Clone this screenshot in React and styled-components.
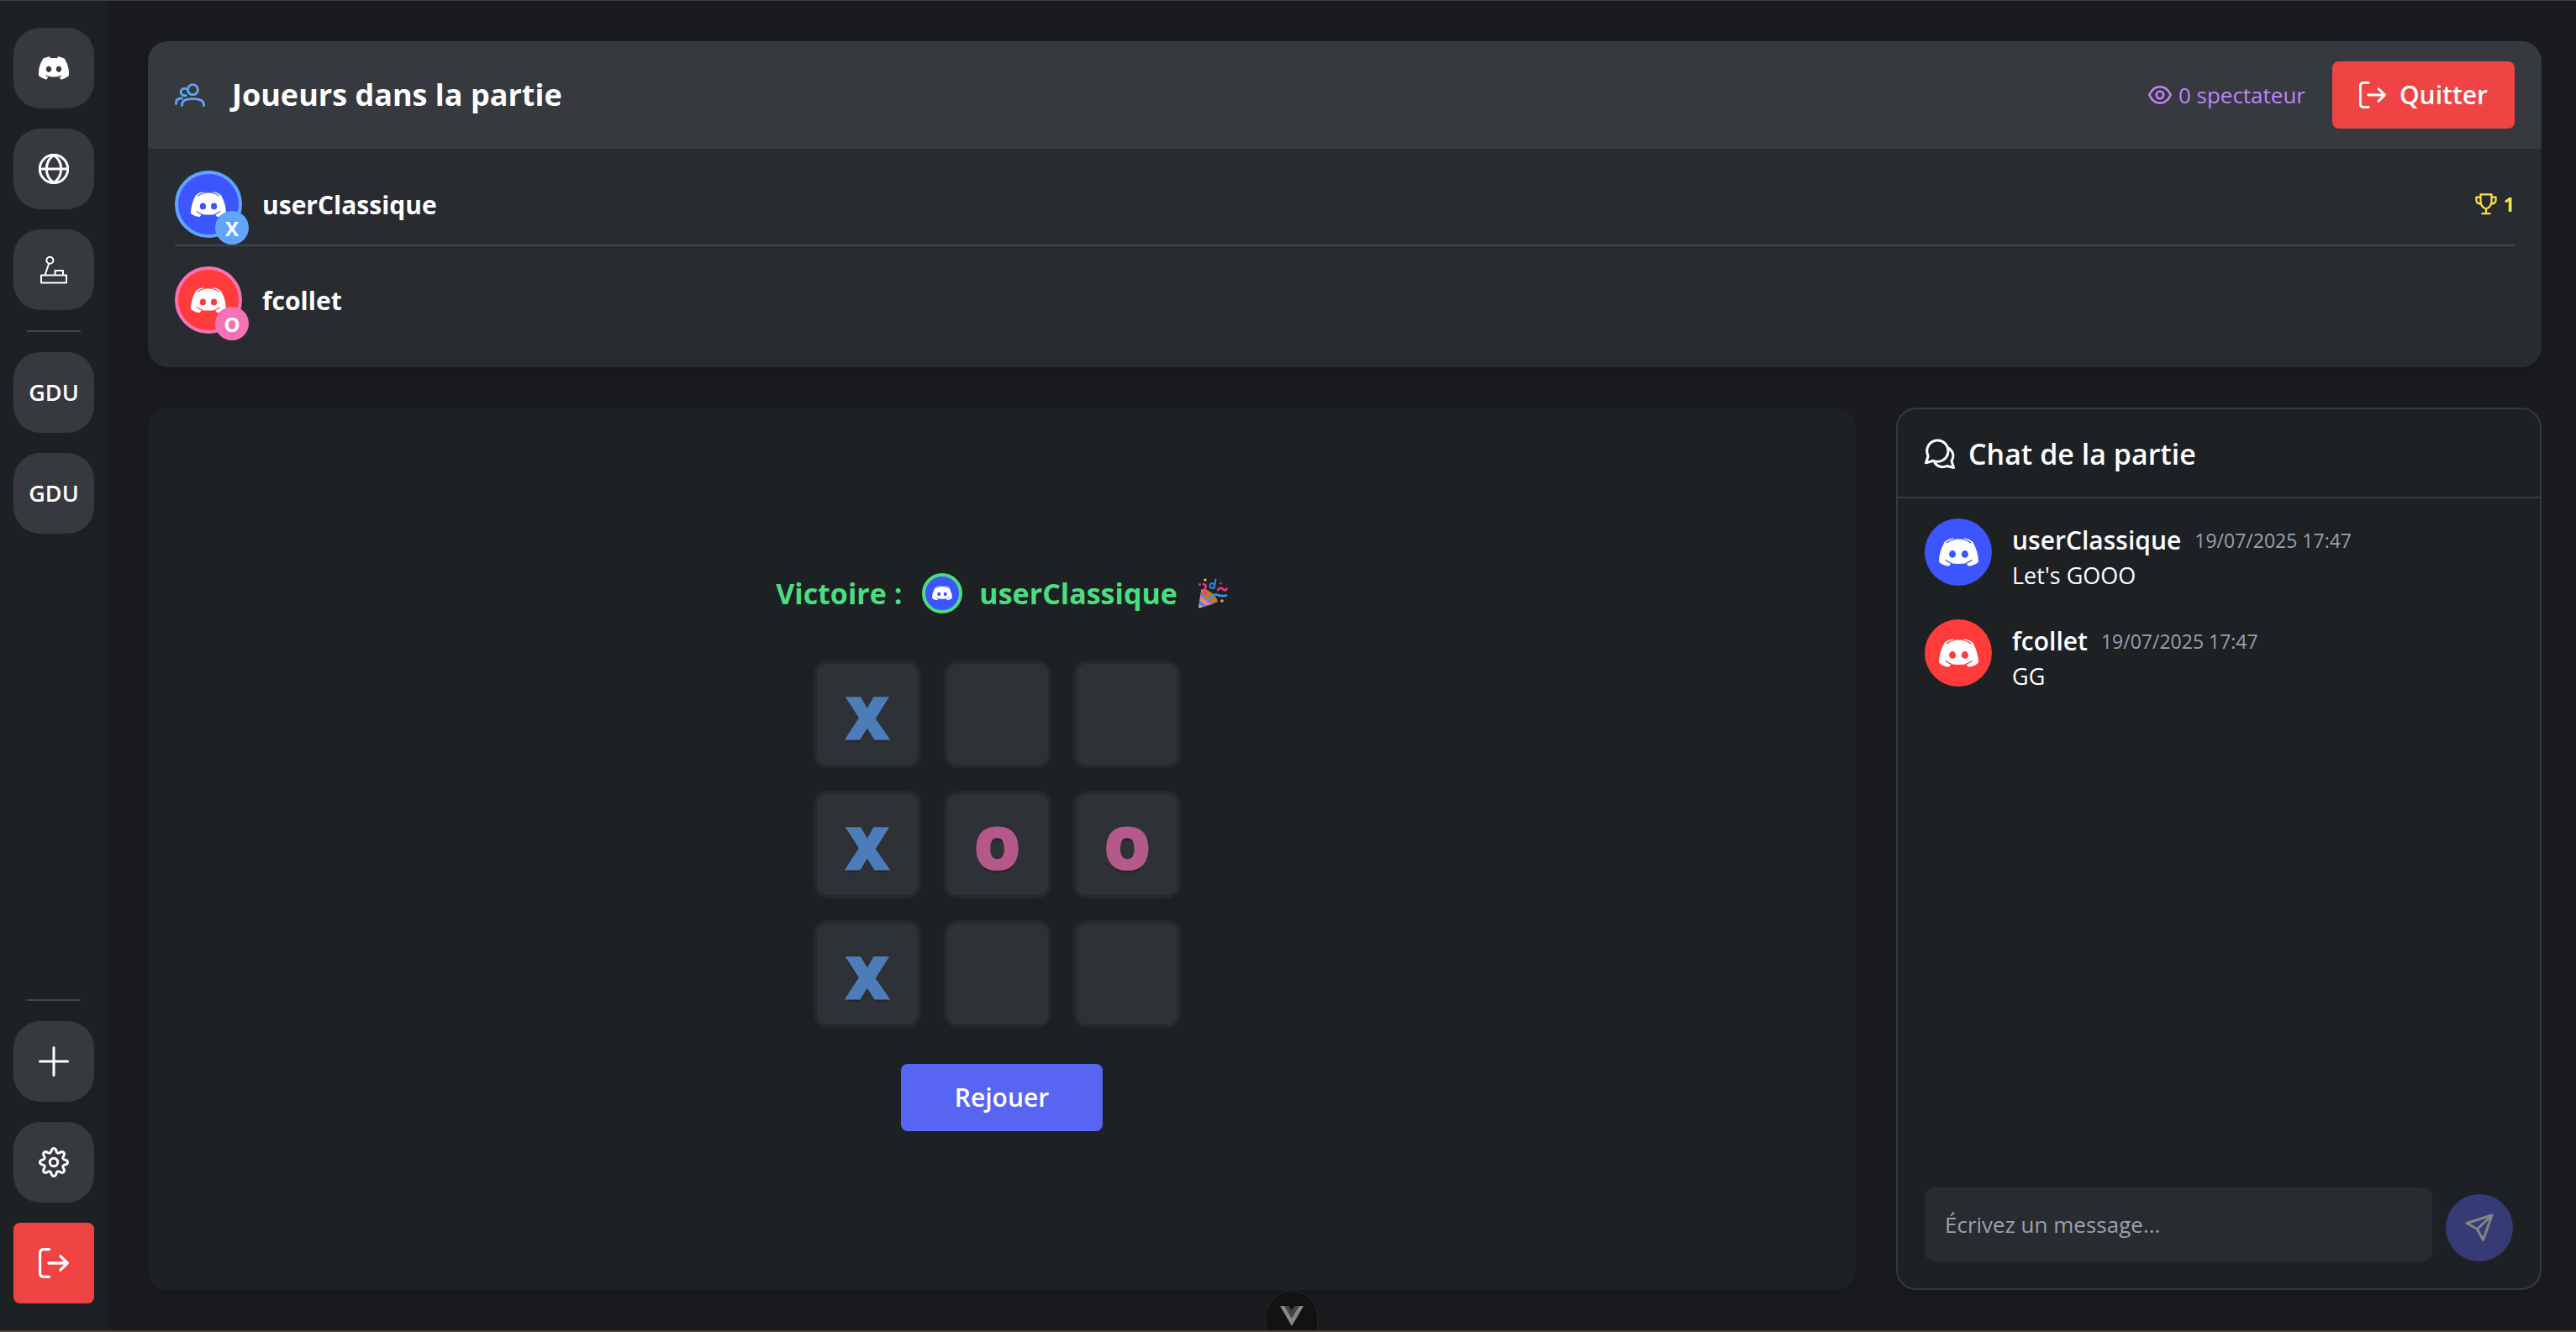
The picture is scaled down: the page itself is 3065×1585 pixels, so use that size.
import React from "react";
import styled, { createGlobalStyle } from "styled-components";
import { SiDiscord } from "react-icons/si";

const GlobalStyle = createGlobalStyle`
  *, *::before, *::after { box-sizing: border-box; }
  body { margin: 0; background: #1a1b1e; }
  button, input { font: inherit; color: inherit; }
  h1, h2, p, ul, ol { margin: 0; padding: 0; font: inherit; list-style: none; }
  button { border: 0; padding: 0; cursor: pointer; }
`;

const blue = "#60a5fa";
const pink = "#f472b6";

/* ---------- icons ---------- */

const Stroke = styled.svg`
  display: block;
  flex: none;
  fill: none;
  stroke: currentColor;
  stroke-linecap: round;
  stroke-linejoin: round;
`;

const Icon = ({ size = 36, box = 36, width = 3, children }) => (
  <Stroke width={size} height={size} viewBox={`0 0 ${box} ${box}`} strokeWidth={width} aria-hidden="true">
    {children}
  </Stroke>
);

const GlobeIcon = () => (
  <Icon>
    <circle cx="18" cy="18" r="16.7" />
    <path d="M1.5 18H34.5M18 1.5C11.5 6 9.3 12 9.3 18S11.5 30 18 34.5M18 1.5C24.5 6 26.7 12 26.7 18S24.5 30 18 34.5" />
  </Icon>
);

const JoystickIcon = () => (
  <Icon width={2}>
    <circle cx="13.4" cy="6.8" r="4" />
    <path d="M12 11L7.5 24.5M3 24.5H33V33.5H3ZM19.5 24V19H29V24" />
  </Icon>
);

const PlusIcon = () => (
  <Icon>
    <path d="M18 1.5V34.5M1.5 18H34.5" />
  </Icon>
);

const gearPath = (() => {
  const points = [];
  for (let i = 0; i < 160; i += 1) {
    const a = (i / 160) * Math.PI * 2;
    const wave = Math.cos(a * 8);
    const r = 14.2 + 2.3 * Math.sign(wave) * Math.pow(Math.abs(wave), 0.7);
    points.push(`${(18 + r * Math.cos(a)).toFixed(2)} ${(18 + r * Math.sin(a)).toFixed(2)}`);
  }
  return `M${points.join("L")}Z`;
})();

const GearIcon = () => (
  <Icon>
    <path d={gearPath} />
    <circle cx="18" cy="18" r="4.7" />
  </Icon>
);

const ExitIcon = ({ size }) => (
  <Icon size={size} width={3.3}>
    <path d="M12.5 1.7H5.5a4 4 0 0 0-4 4V30.3a4 4 0 0 0 4 4H12.5M12 18H34M26 9.8L34.3 18L26 26.2" />
  </Icon>
);

const UsersIcon = () => (
  <Icon width={2.8}>
    <circle cx="21.4" cy="11.7" r="6" />
    <path d="M8.7 30.5V29C8.7 24 13.5 22.6 21.5 22.6S34.5 24 34.5 29.5V30.5" />
    <path d="M13.2 10.6C9 9.8 7.2 12 7.2 14.6S9.3 19.3 13.4 18.6" />
    <path d="M1.5 28.5V27C1.5 23.8 3.5 22 8.5 22" />
  </Icon>
);

const EyeIcon = () => (
  <Icon size={28} box={28} width={2.6}>
    <path d="M1.3 14C4 8 8.5 4.3 14 4.3S24 8 26.7 14C24 20 19.5 23.7 14 23.7S4 20 1.3 14Z" />
    <circle cx="14" cy="14" r="4.2" />
  </Icon>
);

const TrophyIcon = () => (
  <Icon size={26} box={28} width={2.4}>
    <path d="M7 1.5H21V10C21 15 18 18.5 14 20C10 18.5 7 15 7 10ZM14 20V26M9 26H19M7 5H1.5V9C1.5 12 4 13.5 7.5 13.5M21 5H26.5V9C26.5 12 24 13.5 20.5 13.5" />
  </Icon>
);

const CommentsIcon = () => (
  <Icon>
    <path d="M1.5 28.8L4.2 20.5A12.6 12.6 0 1 1 10.5 26.3Z" />
    <path d="M29 11.5C34 15.5 35.5 21 32 26.5L34.5 34.5L26.5 32.5C21 35 15 33.5 12 28.5" />
  </Icon>
);

const SendIcon = () => (
  <Icon size={34} box={34}>
    <path d="M32 2L2 11.5L14.5 18.5L21.5 31.5ZM32 2L14.5 18.5" />
  </Icon>
);

const Glyph = ({ width, ground }) => (
  <svg width={width} viewBox="0 0 140 101" aria-hidden="true">
    <path
      fill="#fff"
      d="M20 14Q33 3 50 1L53 5.5Q70 4 87 5.5L90 1Q107 3 120 14Q140 50 140 86Q124 100 104 100L97 90Q70 94 43 90L36 100Q16 100 0 86Q0 50 20 14Z"
    />
    <g stroke={ground} strokeWidth="4" fill="none">
      <path d="M26 18Q38 8 55 5M114 18Q102 8 85 5M23 78Q32 86 46 91M117 78Q108 86 94 91" />
    </g>
    <ellipse cx="48" cy="58" rx="12" ry="13" fill={ground} />
    <ellipse cx="92" cy="58" rx="12" ry="13" fill={ground} />
  </svg>
);

const PartyIcon = () => (
  <svg width="36" height="36" viewBox="0 0 36 36" role="img" aria-label="Fête">
    <path d="M4.5 13L1 34.5Q1.5 36 4 35L23.5 28Q22 18 4.5 13Z" fill="#f5a64b" />
    <path d="M4 16L20 30L15 31.8L3 22ZM2.3 26L11 33L7 34.5L1.6 31Z" fill="#5b7df0" />
    <path d="M3.2 20L17 31L13 32.7L2.5 24.5Z" fill="#e57b86" opacity=".75" />
    <ellipse cx="14" cy="21" rx="4.5" ry="11.5" transform="rotate(-50 14 21)" fill="#c77a14" />
    <g fill="none" strokeWidth="2.6" strokeLinecap="round">
      <path d="M7 7Q11 8 9 12T10 19" stroke="#f92f8b" />
      <path d="M24 14Q27 10 30 13T34.5 12.5" stroke="#f92f8b" />
      <path d="M14 24Q19 18 24 20T34 20.5" stroke="#2f9bf0" />
      <path d="M21.5 1.5L19.5 12M19.5 7Q15 5 14.5 9T19 11" stroke="#2f8be8" strokeWidth="2" />
    </g>
    <circle cx="9" cy="2" r="1.6" fill="#ffd04a" />
    <circle cx="2.5" cy="7.5" r="1.4" fill="#f92f8b" />
    <circle cx="27.5" cy="6" r="1.6" fill="#c9267d" />
    <circle cx="29" cy="27" r="1.8" fill="#f5a64b" />
  </svg>
);

/* ---------- shell ---------- */

const Shell = styled.div`
  display: flex;
  min-height: 100vh;
  border-top: 1px solid #3f443f;
  border-bottom: 2px solid #4a4540;
  background: #1a1b1e;
  color: #fff;
  font-family: "Open Sans", "Noto Sans", sans-serif;
  font-size: 30px;
  line-height: 48px;
`;

const Sidebar = styled.nav`
  flex: none;
  display: flex;
  flex-direction: column;
  align-items: center;
  gap: 24px;
  width: 128px;
  padding: 32px 0;
  background: #1e2124;
`;

const SideButton = styled.button`
  display: flex;
  align-items: center;
  justify-content: center;
  width: 96px;
  height: 96px;
  border-radius: ${(p) => (p.$danger ? "8px" : "32px")};
  background: ${(p) => (p.$danger ? "#f04444" : "#36393e")};
  font-size: 27px;
  font-weight: 600;
`;

const Divider = styled.hr`
  width: 64px;
  height: 2px;
  margin: 0;
  margin-top: ${(p) => (p.$push ? "auto" : 0)};
  border: 0;
  background: #424549;
`;

const Main = styled.main`
  flex: 1;
  min-width: 0;
  display: flex;
  flex-direction: column;
  gap: 48px;
  padding: 48px 41px 48px 48px;
`;

const Card = styled.section`
  border-radius: 24px;
  background: ${(p) => p.$ground || "#1e2124"};
  box-shadow: 0 20px 30px -6px rgba(0, 0, 0, 0.08), 0 8px 12px -8px rgba(0, 0, 0, 0.08);
  overflow: hidden;
`;

/* ---------- players ---------- */

const PlayersHeader = styled.header`
  display: flex;
  align-items: center;
  gap: 32px;
  padding: 24px 32px;
  background: #36393e;
`;

const HeaderIcon = styled.span`
  color: ${blue};
`;

const PlayersTitle = styled.h1`
  flex: 1;
  font-size: 36px;
  font-weight: 700;
`;

const Spectators = styled.p`
  display: flex;
  align-items: center;
  gap: 8px;
  color: #c084fc;
  font-size: 26px;
`;

const QuitButton = styled.button`
  display: flex;
  align-items: center;
  gap: 16px;
  height: 80px;
  padding: 0 32px;
  border-radius: 8px;
  background: #f04444;
  font-weight: 600;
`;

const PlayerList = styled.ul`
  padding: 2px 32px 32px;
`;

const PlayerRow = styled.li`
  display: flex;
  align-items: center;
  gap: 24px;
  padding: 24px 0 8px;
  font-weight: 700;

  & + & {
    border-top: 2px solid #424549;
  }
`;

const AvatarFrame = styled.div`
  position: relative;
  flex: none;
`;

const Avatar = styled.div`
  flex: none;
  display: flex;
  align-items: center;
  justify-content: center;
  width: ${(p) => p.$size}px;
  height: ${(p) => p.$size}px;
  border: ${(p) => (p.$ring ? `4px solid ${p.$ring}` : "0")};
  border-radius: 50%;
  background: ${(p) => p.$ground};
`;

const Mark = styled.span`
  position: absolute;
  right: -8px;
  bottom: -8px;
  width: 40px;
  height: 40px;
  border-radius: 20px;
  background: ${(p) => p.$ground};
  font-size: 24px;
  line-height: 42px;
  text-align: center;
`;

const PlayerName = styled.span`
  flex: 1;
  padding-top: 2px;
`;

const Wins = styled.span`
  display: flex;
  align-items: center;
  gap: 8px;
  color: #fde047;
  font-size: 23px;
`;

/* ---------- game ---------- */

const Columns = styled.div`
  flex: 1;
  display: flex;
  gap: 48px;
`;

const GameCard = styled(Card)`
  flex: 1;
  display: flex;
  flex-direction: column;
  align-items: center;
  justify-content: center;
`;

const Result = styled.h2`
  display: flex;
  align-items: center;
  gap: 24px;
  margin-bottom: 48px;
  color: #4ade80;
  font-size: 34px;
  font-weight: 700;
  line-height: 64px;
`;

const Winner = styled.span`
  display: flex;
  align-items: center;
  gap: 20px;
`;

const Board = styled.div`
  display: grid;
  grid-template: repeat(3, 1fr) / repeat(3, 1fr);
  gap: 16px;
  width: 448px;
  height: 448px;
`;

const Cell = styled.button`
  width: 128px;
  height: 128px;
  padding-top: 6px;
  border: 4px solid #282b30;
  border-radius: 16px;
  background: #36393e;
  color: ${(p) => p.$color};
  font-size: 68px;
  font-weight: 800;
  line-height: 114px;
  -webkit-text-stroke: 3px ${(p) => p.$color};
  text-shadow: 0 4px 2px rgba(0, 0, 0, 0.3);
  opacity: 0.7;
`;

const ReplayButton = styled.button`
  height: 80px;
  margin-top: 32px;
  padding: 0 64px;
  border-radius: 8px;
  background: #5865f2;
  font-weight: 600;
`;

/* ---------- chat ---------- */

const ChatCard = styled(Card)`
  flex: none;
  display: flex;
  flex-direction: column;
  width: 768px;
  border: 2px solid #36393e;
`;

const ChatTitle = styled.h2`
  display: flex;
  align-items: center;
  gap: 16px;
  height: 106px;
  padding: 2px 32px 0;
  border-bottom: 2px solid #36393e;
  font-size: 34px;
  font-weight: 600;
`;

const Messages = styled.ol`
  flex: 1;
  display: flex;
  flex-direction: column;
  gap: 32px;
  padding: 24px 32px;
`;

const Message = styled.li`
  display: flex;
  gap: 24px;
  height: 88px;
`;

const MessageBody = styled.div`
  padding-top: 2px;
`;

const MessageHead = styled.div`
  display: flex;
  align-items: center;
  gap: 16px;
`;

const Author = styled.span`
  font-weight: 600;
`;

const Time = styled.time`
  color: #99a1af;
  font-size: 23px;
`;

const MessageText = styled.p`
  font-size: 27px;
  line-height: 36px;
`;

const Composer = styled.form`
  display: flex;
  align-items: flex-end;
  gap: 16px;
  padding: 32px;
`;

const MessageInput = styled.input`
  flex: 1;
  min-width: 0;
  height: 88px;
  padding: 0 24px;
  border: 0;
  border-radius: 12px;
  background: #282b30;
  font-size: 26px;

  &::placeholder {
    color: #99a1af;
    opacity: 1;
  }
`;

const SendButton = styled.button`
  display: flex;
  align-items: center;
  justify-content: center;
  width: 80px;
  height: 80px;
  border-radius: 50%;
  background: #363b76;
  color: #848484;
`;

const DevBadge = styled.div`
  position: fixed;
  left: 50%;
  bottom: 2px;
  display: flex;
  justify-content: center;
  width: 64px;
  height: 48px;
  margin-left: -28px;
  padding-top: 17px;
  border: 2px solid #1f1f20;
  border-bottom: 0;
  border-radius: 32px 32px 0 0;
  background: #121212;
`;

const BLUE_GROUND = "#3c55ff";
const RED_GROUND = "#ff3b3b";

const players = [
  { name: "userClassique", mark: "X", color: blue, ground: BLUE_GROUND, wins: 1 },
  { name: "fcollet", mark: "O", color: pink, ground: RED_GROUND, wins: 0 },
];

const messages = [
  { name: "userClassique", ground: BLUE_GROUND, time: "19/07/2025 17:47", text: "Let's GOOO" },
  { name: "fcollet", ground: RED_GROUND, time: "19/07/2025 17:47", text: "GG" },
];

const board = ["X", "", "", "X", "O", "O", "X", "", ""];

export default function App() {
  return (
    <>
      <GlobalStyle />
      <Shell>
        <Sidebar>
          <SideButton aria-label="Accueil"><SiDiscord size={36} /></SideButton>
          <SideButton aria-label="Explorer"><GlobeIcon /></SideButton>
          <SideButton aria-label="Jeux"><JoystickIcon /></SideButton>
          <Divider />
          <SideButton>GDU</SideButton>
          <SideButton>GDU</SideButton>
          <Divider $push />
          <SideButton aria-label="Ajouter"><PlusIcon /></SideButton>
          <SideButton aria-label="Paramètres"><GearIcon /></SideButton>
          <SideButton $danger aria-label="Déconnexion"><ExitIcon /></SideButton>
        </Sidebar>

        <Main>
          <Card $ground="#282b30">
            <PlayersHeader>
              <HeaderIcon><UsersIcon /></HeaderIcon>
              <PlayersTitle>Joueurs dans la partie</PlayersTitle>
              <Spectators><EyeIcon />0 spectateur</Spectators>
              <QuitButton><ExitIcon size={32} />Quitter</QuitButton>
            </PlayersHeader>
            <PlayerList>
              {players.map((p) => (
                <PlayerRow key={p.name}>
                  <AvatarFrame>
                    <Avatar $size={80} $ring={p.color} $ground={p.ground}>
                      <Glyph width={42} ground={p.ground} />
                    </Avatar>
                    <Mark $ground={p.color}>{p.mark}</Mark>
                  </AvatarFrame>
                  <PlayerName>{p.name}</PlayerName>
                  {p.wins > 0 && <Wins><TrophyIcon />{p.wins}</Wins>}
                </PlayerRow>
              ))}
            </PlayerList>
          </Card>

          <Columns>
            <GameCard>
              <Result>
                Victoire :
                <Winner>
                  <Avatar $size={48} $ring="#4ade80" $ground={BLUE_GROUND}>
                    <Glyph width={24} ground={BLUE_GROUND} />
                  </Avatar>
                  userClassique
                </Winner>
                <PartyIcon />
              </Result>
              <Board>
                {board.map((value, i) => (
                  <Cell key={i} $color={value === "X" ? blue : pink} aria-label={`Case ${i + 1}`}>
                    {value}
                  </Cell>
                ))}
              </Board>
              <ReplayButton>Rejouer</ReplayButton>
            </GameCard>

            <ChatCard>
              <ChatTitle><CommentsIcon />Chat de la partie</ChatTitle>
              <Messages>
                {messages.map((m) => (
                  <Message key={m.name}>
                    <Avatar $size={80} $ground={m.ground}>
                      <Glyph width={47} ground={m.ground} />
                    </Avatar>
                    <MessageBody>
                      <MessageHead>
                        <Author>{m.name}</Author>
                        <Time>{m.time}</Time>
                      </MessageHead>
                      <MessageText>{m.text}</MessageText>
                    </MessageBody>
                  </Message>
                ))}
              </Messages>
              <Composer onSubmit={(e) => e.preventDefault()}>
                <MessageInput aria-label="Message" placeholder="Écrivez un message..." />
                <SendButton aria-label="Envoyer"><SendIcon /></SendButton>
              </Composer>
            </ChatCard>
          </Columns>
        </Main>

        <DevBadge>
          <svg width="28" height="24" viewBox="0 0 28 24" aria-hidden="true">
            <path d="M0 0H5.5L14 14.5L22.5 0H28L14 24Z" fill="#868686" />
            <path d="M5.5 0H10.7L14 5.5L17.3 0H22.5L14 14.5Z" fill="#454545" />
          </svg>
        </DevBadge>
      </Shell>
    </>
  );
}
